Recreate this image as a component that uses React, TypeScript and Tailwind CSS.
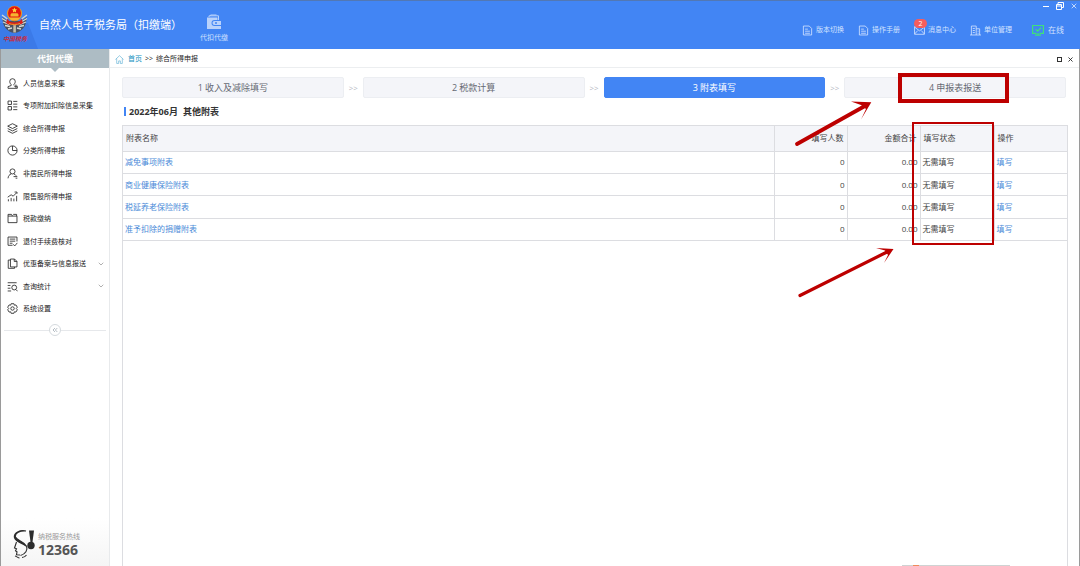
import { useState, type ReactNode } from 'react';
import { ChevronDown, ChevronsLeft, X } from 'lucide-react';

interface MenuItem {
  label: string;
  icon: ReactNode;
  expandable?: boolean;
}

interface Schedule {
  name: string;
  people: number;
  amount: string;
  status: string;
}

const MENU: MenuItem[] = [
  { label: '人员信息采集', icon: <><path d="M6 9.500C4.500 8 4 6.500 4 5a4 4 0 0 1 8 0c0 1.500-.5 3-2 4.500M6 9.500v1.500L1.500 12.500V15H15v-2.500M10 9.500v1.200M10.500 12h5M13 9.500v5" /></> },
  { label: '专项附加扣除信息采集', icon: <><path d="M1.500 1.500h5v5h-5zM1.500 9.500h5v5h-5zM9 2h6M9 6h6M9 10h6M9 14h6" /></> },
  { label: '综合所得申报', icon: <><path d="M8 1l7 3.500L8 8 1 4.500zM1 8l7 3.500L15 8M1 11.500L8 15l7-3.500" /></> },
  { label: '分类所得申报', icon: <><circle cx="8" cy="8" r="6.700" /><path d="M8 1.500V8h6.500" /></> },
  { label: '非居民所得申报', icon: <><circle cx="8" cy="5" r="3.700" /><path d="M1.500 15c.3-3.500 2-5.500 4.500-6.300M10 8.700c1.500.5 2.600 1.300 3.300 2.500M9.500 12.500h5.500M12.500 14.800H15" /></> },
  { label: '限售股所得申报', icon: <><path d="M2 12v3M6 10v5M10 11v4M14 7v8M1 9l5-3.500 3 2 5-5M11 1.500h3.500V4" /></> },
  { label: '税款缴纳', icon: <><path d="M1.500 4.500V14h13V4.500zM1.500 4.500V2h5l1.500 2.500M9 2h5v2.500" /></> },
  { label: '退付手续费核对', icon: <><path d="M14.500 8V1.500h-13v12H8M4 4.500h8M4 7.500h8M4 10.500h4M9 12l2.200 2.500L15 10" /></> },
  { label: '优惠备案与信息报送', expandable: true, icon: <><path d="M5 1.500h6L14.500 5v8H5zM5 3H1.800v12H11v-2M10.500 1.500V5h4" /></> },
  { label: '查询统计', expandable: true, icon: <><path d="M1 2.500h13M1 6.500h4M1 10.500h4M1 14.500h5M13 12.500l2.500 2.500" /><circle cx="10.500" cy="9.500" r="3.500" /></> },
  { label: '系统设置', icon: <><path d="M6 1h4l.7 2.200L13 2.800l2 3.400L13.500 8l1.500 1.800-2 3.400-2.300-.4L10 15H6l-.7-2.200-2.300.4-2-3.400L2.500 8 1 6.200l2-3.400 2.300.4z" /><circle cx="8" cy="8" r="2.500" /></> },
];

const STEPS = ['1 收入及减除填写', '2 税款计算', '3 附表填写', '4 申报表报送'];

const SCHEDULES: Schedule[] = [
  { name: '减免事项附表', people: 0, amount: '0.00', status: '无需填写' },
  { name: '商业健康保险附表', people: 0, amount: '0.00', status: '无需填写' },
  { name: '税延养老保险附表', people: 0, amount: '0.00', status: '无需填写' },
  { name: '准予扣除的捐赠附表', people: 0, amount: '0.00', status: '无需填写' },
];

function Emblem() {
  return (
    <svg viewBox="0 0 38 48" className="h-12 w-[38px] shrink-0" aria-hidden="true">
      <path d="M0 22L28 22L38 48H0z" fill="#3b7ae8" />
      <path d="M2.500 16c-.5 9 5 15.500 12 16 7-.5 12.500-7 12-16l-5 4h-14z" fill="#4a5260" />
      <path d="M2 14l5.500 4M2 17.500l6 3.500M3 21l6 2.500M5 24.500l5 1M8 28l4-1M27 14l-5.500 4M27 17.500L21 21M26 21l-6 2.500M24 24.500l-5 1M21 28l-4-1" stroke="#d6d8d3" strokeWidth="1.300" />
      <path d="M13.300 24h2.600v7.500h-2.600z" fill="#c3bda5" />
      <ellipse cx="14.500" cy="12.500" rx="7.600" ry="7.800" fill="#e5962b" />
      <ellipse cx="14.500" cy="12" rx="6.500" ry="6.800" fill="#e3170f" />
      <path d="M14.500 6.500l.8 1.700 1.800.2-1.300 1.200.3 1.900-1.600-.9-1.600.9.3-1.900-1.300-1.200 1.800-.2z" fill="#ffd93b" />
      <path d="M10.500 13.500l1-1.300h6l1 1.300v2h-8zM9 16.500h11l-2 2.500h-7z" fill="#f6b530" />
      <path d="M7.500 17.500c1 3 4 4 7 4s6-1 7-4l1.500 4.500c-4 3-13 3-17 0z" fill="#d9201a" />
      <path d="M9 22.500c3 1.300 8 1.300 11 0" stroke="#e5a030" fill="none" />
      <text x="3" y="40" fontSize="6" fontWeight="700" fontStyle="italic" fill="#c92b3c">中国税务</text>
    </svg>
  );
}

function LineIcon({ children }: { children: ReactNode }) {
  return (
    <svg viewBox="0 0 16 16" className="size-[11px] shrink-0" fill="none" stroke="currentColor" strokeWidth="1.200" aria-hidden="true">
      {children}
    </svg>
  );
}

function DocIcon() {
  return <LineIcon><path d="M2 1.500h8.500L14 5v9.500H2zM4.500 6h4M4.500 9h7M4.500 12h7" /></LineIcon>;
}

function Header() {
  return (
    <header className="flex h-[49px] shrink-0 border-t border-[#5278b4] bg-[#4285f4] text-white">
      <Emblem />
      <h1 className="flex items-center pt-px pl-px text-[11px]">自然人电子税务局（扣缴端）</h1>
      <button type="button" className="ml-[18px] flex flex-col items-center pt-[13px] text-[7px] leading-[10px] text-[#d0e1ff]">
        <svg viewBox="0 0 16 16" className="mb-[3px] size-4" fill="#b9d2fb" aria-hidden="true">
          <path d="M1 3.500h10.500V6h-3a2.500 2.500 0 0 0 0 6h6.500v3H1z" />
          <path d="M3 3V1.800h9.500V6M4.500 1.800V1h6" fill="none" stroke="#b9d2fb" />
          <path d="M8.500 7H15v4H8.500a2 2 0 0 1 0-4z" />
          <circle cx="10" cy="9" r="1" fill="#4285f4" />
        </svg>
        代扣代缴
      </button>

      <div className="ml-auto flex flex-col">
        <div className="flex h-[10px] items-center justify-end gap-[6px] pr-[2px]">
          <button type="button" aria-label="最小化"><svg viewBox="0 0 8 8" className="size-2" stroke="white"><path d="M1 4.500h6" /></svg></button>
          <button type="button" aria-label="还原"><svg viewBox="0 0 8 8" className="size-2" fill="none" stroke="white"><path d="M.5 2.500h5v5h-5zM2 2.500v-2h5.500v5h-2M.5 4h5" /></svg></button>
          <button type="button" aria-label="关闭"><X className="size-2" /></button>
        </div>
        <nav className="flex h-[38px] items-center pr-4 text-[7px] text-[#d3e3ff]">
          <button type="button" className="flex w-14 items-center gap-[3px]"><DocIcon />版本切换</button>
          <button type="button" className="flex w-14 items-center gap-[3px]"><DocIcon />操作手册</button>
          <button type="button" className="relative flex w-14 items-center gap-[3px]">
            <LineIcon><path d="M.8 2.500h14.400v11H.8zM.8 3L8 8.500 15.200 3M1 13l4.500-5M15 13l-4.500-5" /></LineIcon>
            <span className="absolute -top-[6px] left-0 flex h-[9px] w-[13px] items-center justify-center rounded-full bg-[#f65d5d] text-[7px] leading-none text-white">2</span>
            消息中心
          </button>
          <button type="button" className="flex w-[62px] items-center gap-[3px]">
            <LineIcon><path d="M2 14.500v-13h7v13M9 5.500h5v9M0 14.500h16M4 5h3M4 8h3M4 11h3M11 9h1.500M11 12h1.500" /></LineIcon>
            单位管理
          </button>
          <span className="flex items-center gap-[4px] text-[8px]">
            <svg viewBox="0 0 16 16" className="size-3" fill="none" stroke="#3ee07c" strokeWidth="1.600" aria-hidden="true">
              <path d="M6 12.500H.8V2h14.400v10.500H10M4 14.800h8M8 12v2.800M5 7l2.500 2.500L12 5" />
            </svg>
            在线
          </span>
        </nav>
      </div>
    </header>
  );
}

function Sidebar() {
  return (
    <aside className="flex w-[110px] shrink-0 flex-col border-r border-l border-r-[#e8eaec] border-l-[#9a9a9a] bg-white">
      <h2 className="relative flex h-[19px] items-center justify-center bg-[#adbcc4] text-[9px] font-bold text-white">
        代扣代缴
        <svg viewBox="0 0 8 4" className="absolute top-full h-1 w-2" fill="#adbcc4" aria-hidden="true"><path d="M0 0h8L4 4z" /></svg>
      </h2>
      <nav className="mt-1 flex h-[248px] flex-col">
        {MENU.map((item) => (
          <button key={item.label} type="button" className="flex flex-1 items-center pr-1 pl-[6px] text-left text-[7px] leading-none text-[#222]">
            <LineIcon>{item.icon}</LineIcon>
            <span className="ml-[5px] flex-1 whitespace-nowrap">{item.label}</span>
            {item.expandable && <ChevronDown className="size-2 text-[#888]" strokeWidth={2} />}
          </button>
        ))}
      </nav>
      <div className="mx-[3px] mt-1 flex items-center">
        <span className="h-px flex-1 bg-[#e6e8eb]" />
        <button type="button" aria-label="收起菜单" className="flex size-3 items-center justify-center rounded-full border border-[#d5dade] text-[#8c98a3]">
          <ChevronsLeft className="size-2" />
        </button>
        <span className="h-px flex-1 bg-[#e6e8eb]" />
      </div>
      <div className="mt-auto flex h-12 items-start gap-[3px] bg-linear-to-b from-white to-[#f5f5f5] pt-3 pl-3">
        <svg viewBox="0 0 22 30" className="h-[30px] w-[22px]" fill="none" stroke="#2c2c2c" aria-hidden="true">
          <path d="M13 1C7 .5 1.500 3 2.500 7c1 3.500 8.500 4 10.500 9-3-3-10.500-4-11.500-8.500C.5 3 7-.5 13 1z" fill="#2c2c2c" strokeWidth="1.200" />
          <path d="M3.500 12L1.500 18l2 .8-1 2 1.500 1-.5 3 3.500.2M13.500 15.500c1.500 5-1 8.500-6 10M2 26c2 .5 3 2 4.500 2M9 27.500c1.500 0 3-.5 4.500-2.500" strokeWidth="1.100" />
          <path d="M16 .5h5l-1.500 11.500h-2z" fill="#2c2c2c" stroke="none" />
          <circle cx="18" cy="15.500" r="3.700" fill="#2c2c2c" stroke="none" />
        </svg>
        <div className="text-[#555]">
          <div className="text-[7px] leading-[13px] text-[#999]">纳税服务热线</div>
          <div className="text-[14px] leading-[14px] font-bold">12366</div>
        </div>
      </div>
    </aside>
  );
}

function Breadcrumb() {
  return (
    <div className="flex h-[19px] shrink-0 items-center border-b border-[#eceef0] pt-[2px] pr-[5px] pl-[5px] text-[7px] text-[#222]">
      <svg viewBox="0 0 16 16" className="mr-1 size-[9px]" fill="none" stroke="#4aa5cf" aria-hidden="true">
        <path d="M.8 8L8 1.200 15.200 8M3 6.500V15h3.500v-4.500h3V15H13V6.500" />
      </svg>
      <a href="#home" className="text-[#0f8fc0]">首页</a>
      <span className="mx-[3px]">&gt;&gt;</span>
      <span>综合所得申报</span>
      <div className="ml-auto flex items-center gap-[5px]">
        <button type="button" aria-label="最大化" className="size-[5px] border border-[#333]" />
        <button type="button" aria-label="关闭页签"><X className="size-[7px]" strokeWidth={3} /></button>
      </div>
    </div>
  );
}

function StepBar({ active, onSelect }: { active: number; onSelect: (i: number) => void }) {
  return (
    <div className="mr-[2px] flex h-[21px]">
      {STEPS.map((step, i) => (
        <div key={step} className={i === 0 ? 'flex flex-[222]' : 'flex flex-[241]'}>
          {i > 0 && <span className="flex w-[19px] items-center justify-center text-[8px] text-[#b5b8bf]">&gt;&gt;</span>}
          <button
            type="button"
            onClick={() => onSelect(i)}
            className={`flex-1 rounded-xs border text-[9px] leading-none ${i === active ? 'border-[#4285f4] bg-[#4285f4] text-white' : 'border-[#eceef2] bg-[#f4f5f9] text-[#666a73]'}`}
          >
            {step}
          </button>
        </div>
      ))}
    </div>
  );
}

function ScheduleTable() {
  return (
    <table className="h-[115px] w-full table-fixed border-collapse text-[8px] leading-none text-[#444]">
      <colgroup>
        <col />
        <col className="w-[73px]" />
        <col className="w-[73px]" />
        <col className="w-[74px]" />
        <col className="w-[73px]" />
      </colgroup>
      <thead>
        <tr className="h-[25px] border-b border-[#dcdde1] bg-[#f4f5f9] text-left">
          <th className="px-[3px] font-normal">附表名称</th>
          <th className="border-l border-[#dcdde1] px-[3px] text-right font-normal">填写人数</th>
          <th className="border-l border-[#dcdde1] px-[3px] text-right font-normal">金额合计</th>
          <th className="border-l border-[#dcdde1] px-[3px] font-normal">填写状态</th>
          <th className="border-l border-[#dcdde1] px-[3px] font-normal">操作</th>
        </tr>
      </thead>
      <tbody>
        {SCHEDULES.map((row) => (
          <tr key={row.name} className="border-b border-[#dcdde1]">
            <td className="px-[2px]"><a href="#detail" className="text-[#4a8ad8]">{row.name}</a></td>
            <td className="border-l border-[#dcdde1] px-[2px] text-right">{row.people}</td>
            <td className="border-l border-[#dcdde1] px-[2px] text-right">{row.amount}</td>
            <td className="border-l border-[#dcdde1] px-[2px]">{row.status}</td>
            <td className="border-l border-[#dcdde1] px-[2px]"><a href="#fill" className="text-[#4a8ad8]">填写</a></td>
          </tr>
        ))}
      </tbody>
    </table>
  );
}

// Hand-drawn guide marks, pinned to the right edge above the form.
function GuideMarks() {
  return (
    <svg viewBox="790 0 290 310" className="pointer-events-none absolute top-0 right-0 h-[310px] w-[290px]" aria-hidden="true">
      <rect x="900" y="75" width="107" height="26" fill="none" stroke="#bd0000" strokeWidth="4" />
      <rect x="913" y="123" width="80" height="121" fill="none" stroke="#bd0000" strokeWidth="2" />
      <path d="M797 144L864 106.500" stroke="#bd0000" strokeWidth="3.800" strokeLinecap="round" />
      <path d="M871.300 102.200L851 101.500 861 105 866 109 861 119.500z" fill="#bd0000" />
      <path d="M800 295.500L887 252" stroke="#bd0000" strokeWidth="3.200" strokeLinecap="round" />
      <path d="M893.500 249L876 248 885 250.500 888 255 884 263z" fill="#bd0000" />
    </svg>
  );
}

export default function App() {
  const [step, setStep] = useState(2);

  return (
    <div className="relative flex h-screen flex-col overflow-hidden bg-white font-['Open_Sans','Noto_Sans_CJK_SC',sans-serif]" lang="zh-CN">
      <Header />
      <div className="flex min-h-0 flex-1">
        <Sidebar />
        <main className="flex min-w-0 flex-1 flex-col border-r border-[#9a9a9a]">
          <Breadcrumb />
          <div className="flex flex-1 flex-col pt-[9px] pr-[11px] pl-3">
            <StepBar active={step} onSelect={setStep} />
            <h2 className="flex h-[27px] items-center gap-[3px] pl-[2px] text-[9px] font-bold text-[#333]">
              <span className="h-[9px] w-[2px] bg-[#4285f4]" />
              <span>2022年06月</span>
              <span className="ml-[2px]">其他附表</span>
            </h2>
            <div className="flex flex-1 flex-col border-x border-t border-[#dcdde1]">
              <ScheduleTable />
              <div className="mt-auto mr-[57px] flex h-px w-[108px] self-end bg-[#cfd3d3]">
                <span className="ml-[11px] w-[6px] bg-[#ef8a5c]" />
              </div>
            </div>
          </div>
        </main>
      </div>
      <GuideMarks />
    </div>
  );
}
